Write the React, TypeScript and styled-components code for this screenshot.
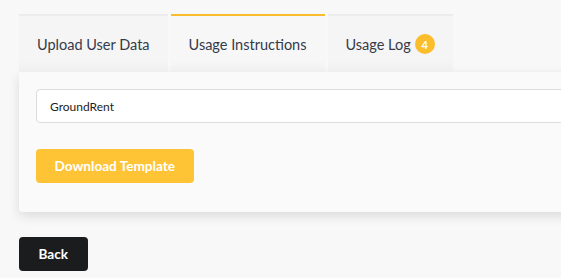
import styled, { createGlobalStyle } from "styled-components";

const GlobalStyle = createGlobalStyle`
  html, body {
    margin: 0;
    background: #f8f8f8;
    font-family: Lato, "Open Sans", sans-serif;
    overflow: hidden;
  }
`;

const Page = styled.div`
  padding: 14px 0 0 19px;
  width: 620px;
`;

const TabBar = styled.div`
  display: flex;
  gap: 3px;
`;

const Tab = styled.div<{ $active?: boolean }>`
  display: flex;
  align-items: center;
  gap: 4px;
  height: 56px;
  padding: 0 18px;
  font-size: 14.5px;
  color: #343a4a;
  background: linear-gradient(
    to bottom,
    ${(p) => (p.$active ? "#f7f7f7" : "#f5f5f5")} 80%,
    #efefef 100%
  );
  border-top: 2px solid ${(p) => (p.$active ? "#fbbd2b" : "#ececec")};
`;

const Badge = styled.span`
  display: inline-flex;
  align-items: center;
  justify-content: center;
  width: 20px;
  height: 20px;
  border-radius: 50%;
  background: #fbbd2b;
  color: #fff;
  font-size: 11px;
  font-weight: 700;
`;

const Panel = styled.div`
  background: #fafafa;
  padding: 17px 17px 29px;
  border-radius: 0 0 4px 4px;
  box-shadow: 0 4px 12px rgba(0, 0, 0, 0.12);
  display: flex;
  flex-direction: column;
  align-items: flex-start;
  gap: 26px;
`;

const Input = styled.input`
  width: 100%;
  height: 34px;
  box-sizing: border-box;
  border: 1px solid #dcdcdc;
  border-radius: 4px;
  background: #fff;
  padding: 0 13px;
  font-family: Lato, "Open Sans", sans-serif;
  font-size: 12px;
  color: #222;
  outline: none;
`;

const Button = styled.button<{ $dark?: boolean }>`
  height: 34px;
  padding: 0 ${(p) => (p.$dark ? "19.5px" : "18.5px")};
  border: none;
  border-radius: 4px;
  background: ${(p) => (p.$dark ? "#1b1c1d" : "#fec435")};
  color: #fff;
  font-family: Lato, "Open Sans", sans-serif;
  font-size: 13.6px;
  font-weight: 700;
  cursor: pointer;
`;

const Footer = styled.div`
  margin-top: 25px;
`;

export default function App() {
  return (
    <>
      <GlobalStyle />
      <Page>
        <TabBar>
          <Tab>Upload User Data</Tab>
          <Tab $active>Usage Instructions</Tab>
          <Tab>
            Usage Log <Badge>4</Badge>
          </Tab>
        </TabBar>
        <Panel>
          <Input defaultValue="GroundRent" />
          <Button>Download Template</Button>
        </Panel>
        <Footer>
          <Button $dark>Back</Button>
        </Footer>
      </Page>
    </>
  );
}
